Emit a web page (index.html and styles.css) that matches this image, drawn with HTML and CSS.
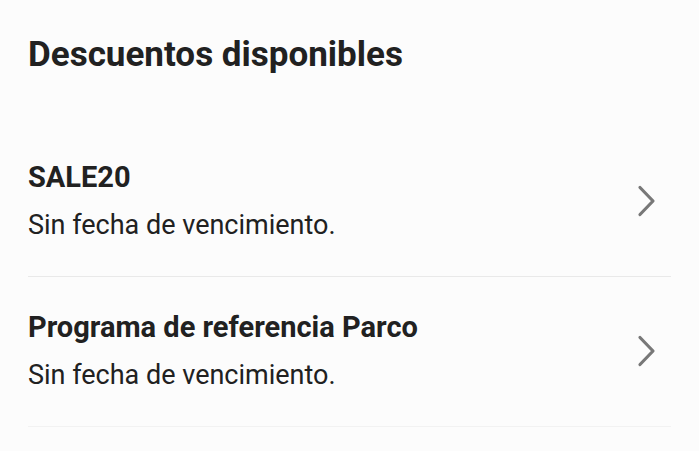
FILE: index.html
```html
<!DOCTYPE html>
<html lang="es">
<head>
  <meta charset="UTF-8">
  <title>Descuentos disponibles</title>
  <link rel="stylesheet" href="styles.css">
</head>
<body>
  <div class="page">
    <h1>Descuentos disponibles</h1>
    <ul class="discounts">
      <li class="discount">
        <div class="info">
          <div class="code">SALE20</div>
          <div class="expiry">Sin fecha de vencimiento.</div>
        </div>
        <svg class="chevron" width="20" height="32" viewBox="0 0 20 32"><path d="M3 2.5 L16 16 L3 29.5" /></svg>
      </li>
      <li class="discount">
        <div class="info">
          <div class="code">Programa de referencia Parco</div>
          <div class="expiry">Sin fecha de vencimiento.</div>
        </div>
        <svg class="chevron" width="20" height="32" viewBox="0 0 20 32"><path d="M3 2.5 L16 16 L3 29.5" /></svg>
      </li>
    </ul>
  </div>
</body>
</html>
```

FILE: styles.css
```css
body { margin: 0; background: #fcfcfc; font-family: Roboto, "Noto Sans", sans-serif; color: #212121; }
.page { padding: 35px 28px 0; }
h1 { margin: 0 0 52px; font-size: 35px; line-height: 40px; font-weight: 700; }
.discounts { list-style: none; margin: 0; padding: 0; }
.discount { display: flex; align-items: center; justify-content: space-between; padding: 33px 14px 34px 0; border-bottom: 1px solid #e9e9e9; }
.discount:last-child { border-bottom-color: #f2f2f2; }
.info { display: flex; flex-direction: column; gap: 14px; }
.code { font-size: 29px; line-height: 34px; font-weight: 700; }
.expiry { font-size: 27px; line-height: 34px; }
.chevron { fill: none; stroke: #787878; stroke-width: 3.2; stroke-linecap: round; stroke-linejoin: round; }
```
